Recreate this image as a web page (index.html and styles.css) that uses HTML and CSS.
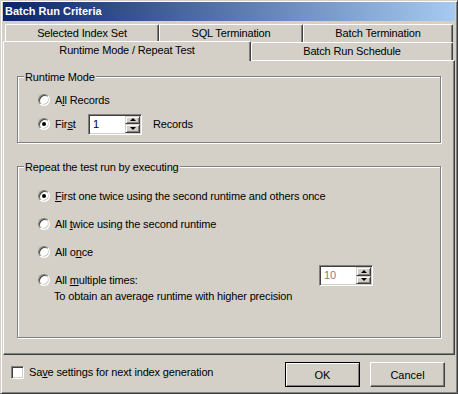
FILE: index.html
```html
<!DOCTYPE html>
<html lang="en">
<head>
    <meta charset="UTF-8">
    <title>Batch Run Criteria</title>
    <link rel="stylesheet" href="styles.css">
</head>
<body>
    <div class="window">
        <div class="titlebar">Batch Run Criteria</div>

        <div class="tabs">
            <div class="tab-row">
                <div class="tab tab-index">Selected Index Set</div>
                <div class="tab tab-sql">SQL Termination</div>
                <div class="tab tab-batch">Batch Termination</div>
            </div>
            <div class="tab-row">
                <div class="tab tab-runtime active">Runtime Mode / Repeat Test</div>
                <div class="tab tab-schedule">Batch Run Schedule</div>
            </div>
        </div>

        <div class="panel">
            <div class="group group-runtime">
                <span class="legend">Runtime Mode</span>
                <div class="rows">
                    <div class="row">
                        <span class="radio"></span>
                        <span>A<u>l</u>l Records</span>
                    </div>
                    <div class="row">
                        <span class="radio checked"></span>
                        <span class="first-label">Fir<u>s</u>t</span>
                        <div class="spinner">
                            <span class="spin-value">1</span>
                            <div class="spin-btns">
                                <span class="spin-btn up"></span>
                                <span class="spin-btn down"></span>
                            </div>
                        </div>
                        <span class="records">Records</span>
                    </div>
                </div>
            </div>

            <div class="group group-repeat">
                <span class="legend">Repeat the test run by executing</span>
                <div class="rows">
                    <div class="row">
                        <span class="radio checked"></span>
                        <span><u>F</u>irst one twice using the second runtime and others once</span>
                    </div>
                    <div class="row">
                        <span class="radio"></span>
                        <span>All <u>t</u>wice using the second runtime</span>
                    </div>
                    <div class="row">
                        <span class="radio"></span>
                        <span>All o<u>n</u>ce</span>
                    </div>
                    <div class="row">
                        <span class="radio"></span>
                        <span>All <u>m</u>ultiple times:</span>
                        <div class="spinner spinner-times disabled">
                            <span class="spin-value">10</span>
                            <div class="spin-btns">
                                <span class="spin-btn up"></span>
                                <span class="spin-btn down"></span>
                            </div>
                        </div>
                    </div>
                    <div class="note">To obtain an average runtime with higher precision</div>
                </div>
            </div>
        </div>

        <div class="footer">
            <label class="check-item">
                <span class="checkbox"></span>
                <span>Sa<u>v</u>e settings for next index generation</span>
            </label>
            <div class="buttons">
                <button class="btn btn-default">OK</button>
                <button class="btn">Cancel</button>
            </div>
        </div>
    </div>
</body>
</html>
```

FILE: styles.css
```css
:root {
    --face: #d4d0c8;
    --light: #ffffff;
    --shadow: #808080;
    --dark: #404040;
}

* {
    box-sizing: border-box;
    margin: 0;
    padding: 0;
}

body {
    font-family: 'Liberation Sans', Arial, sans-serif;
    font-size: 11px;
    letter-spacing: -0.15px;
    color: #000;
    background: var(--face);
    width: 458px;
    height: 394px;
    overflow: hidden;
}

.window {
    width: 458px;
    height: 394px;
    border: 1px solid;
    border-color: var(--face) var(--dark) var(--dark) var(--face);
    box-shadow: inset 1px 1px var(--light), inset -1px -1px var(--shadow);
    padding: 1px 2px 2px 2px;
    background: var(--face);
    display: flex;
    flex-direction: column;
}

.titlebar {
    height: 19px;
    line-height: 19px;
    padding-left: 2px;
    font-weight: bold;
    letter-spacing: 0;
    color: #fff;
    background: linear-gradient(90deg, #0a246a 0%, #a6caf0 100%);
}

/* tabs */

.tabs {
    display: flex;
    flex-direction: column;
    padding-top: 3px;
}

.tab-row {
    display: flex;
    height: 18px;
}

.tab-row:first-child {
    padding-left: 2px;
}

.tab {
    height: 18px;
    line-height: 17px;
    text-align: center;
    white-space: nowrap;
    background: var(--face);
    border-top: 1px solid var(--light);
    border-left: 1px solid var(--light);
    border-right: 1px solid var(--dark);
    box-shadow: inset -1px 0 var(--shadow);
    border-radius: 2px 2px 0 0;
}

.tab-index { width: 154px; }
.tab-sql { width: 144px; }
.tab-batch { width: 150px; }
.tab-schedule { width: 202px; }

.tab.active {
    width: 248px;
    height: 20px;
    margin-top: -1px;
    position: relative;
    z-index: 1;
}

/* page */

.panel {
    width: 452px;
    height: 295px;
    border: 1px solid;
    border-color: var(--light) var(--dark) var(--dark) var(--light);
    box-shadow: inset -1px -1px var(--shadow);
    padding: 15px 0 0 13px;
}

.group {
    width: 424px;
    display: flex;
    flex-direction: column;
    border: 1px solid var(--shadow);
    box-shadow: inset 1px 1px var(--light), 1px 1px var(--light);
}

.group-runtime { height: 67px; }

.group-repeat {
    height: 172px;
    margin-top: 23px;
}

.legend {
    align-self: flex-start;
    line-height: 13px;
    margin: -6px 0 -7px 6px;
    padding: 0 1px;
    background: var(--face);
}

.rows {
    display: flex;
    flex-direction: column;
    padding-left: 20px;
}

.group-runtime .rows { padding-top: 11px; }
.group-repeat .rows { padding-top: 15px; }

.row {
    display: flex;
    align-items: center;
    white-space: nowrap;
}

.group-runtime .row { height: 24px; }
.group-repeat .row { height: 28px; }

.note {
    line-height: 14px;
    margin: -5px 0 0 16px;
}

.radio {
    width: 12px;
    height: 12px;
    margin-right: 5px;
    border-radius: 50%;
    border: 1px solid;
    border-color: var(--shadow) var(--light) var(--light) var(--shadow);
    box-shadow: inset 1px 1px var(--dark), inset -1px -1px var(--face);
    background: #fff;
    display: flex;
    align-items: center;
    justify-content: center;
}

.radio.checked::after {
    content: "";
    width: 4px;
    height: 4px;
    border-radius: 50%;
    background: #000;
}

.first-label {
    width: 33px;
}

.records {
    margin-left: 11px;
}

/* spin box */

.spinner {
    width: 54px;
    height: 21px;
    display: flex;
    border: 1px solid;
    border-color: var(--shadow) var(--light) var(--light) var(--shadow);
    box-shadow: inset 1px 1px var(--dark), inset -1px -1px var(--face);
    background: #fff;
    padding: 1px;
}

.spinner-times {
    margin-left: auto;
    margin-right: 67px;
    align-self: flex-start;
    margin-top: -1px;
}

.spin-value {
    flex: 1;
    padding-left: 3px;
    line-height: 17px;
}

.disabled .spin-value {
    color: var(--shadow);
}

.spin-btns {
    width: 15px;
    display: flex;
    flex-direction: column;
}

.spin-btn {
    flex: 1;
    background: var(--face);
    border: 1px solid;
    border-color: var(--face) var(--dark) var(--dark) var(--face);
    box-shadow: inset 1px 1px var(--light), inset -1px -1px var(--shadow);
    display: flex;
    align-items: center;
    justify-content: center;
}

.spin-btn::after {
    content: "";
    width: 0;
    height: 0;
    border-left: 3px solid transparent;
    border-right: 3px solid transparent;
}

.spin-btn.up::after {
    border-bottom: 3px solid #000;
}

.spin-btn.down::after {
    border-top: 3px solid #000;
}

/* footer */

.footer {
    display: flex;
    align-items: flex-start;
    padding-top: 7px;
}

.check-item {
    display: flex;
    align-items: center;
    margin: 4px 0 0 8px;
    line-height: 13px;
}

.checkbox {
    width: 13px;
    height: 13px;
    margin-right: 5px;
    border: 1px solid;
    border-color: var(--shadow) var(--light) var(--light) var(--shadow);
    box-shadow: inset 1px 1px var(--dark), inset -1px -1px var(--face);
    background: #fff;
}

.buttons {
    display: flex;
    gap: 10px;
    margin: 0 10px 0 auto;
}

.btn {
    width: 75px;
    height: 25px;
    font: inherit;
    color: #000;
    background: var(--face);
    border: 1px solid;
    border-color: var(--light) var(--dark) var(--dark) var(--light);
    box-shadow: inset -1px -1px var(--shadow);
}

.btn-default {
    border-color: #000;
    box-shadow: inset 1px 1px var(--light), inset -1px -1px var(--shadow);
}
```
